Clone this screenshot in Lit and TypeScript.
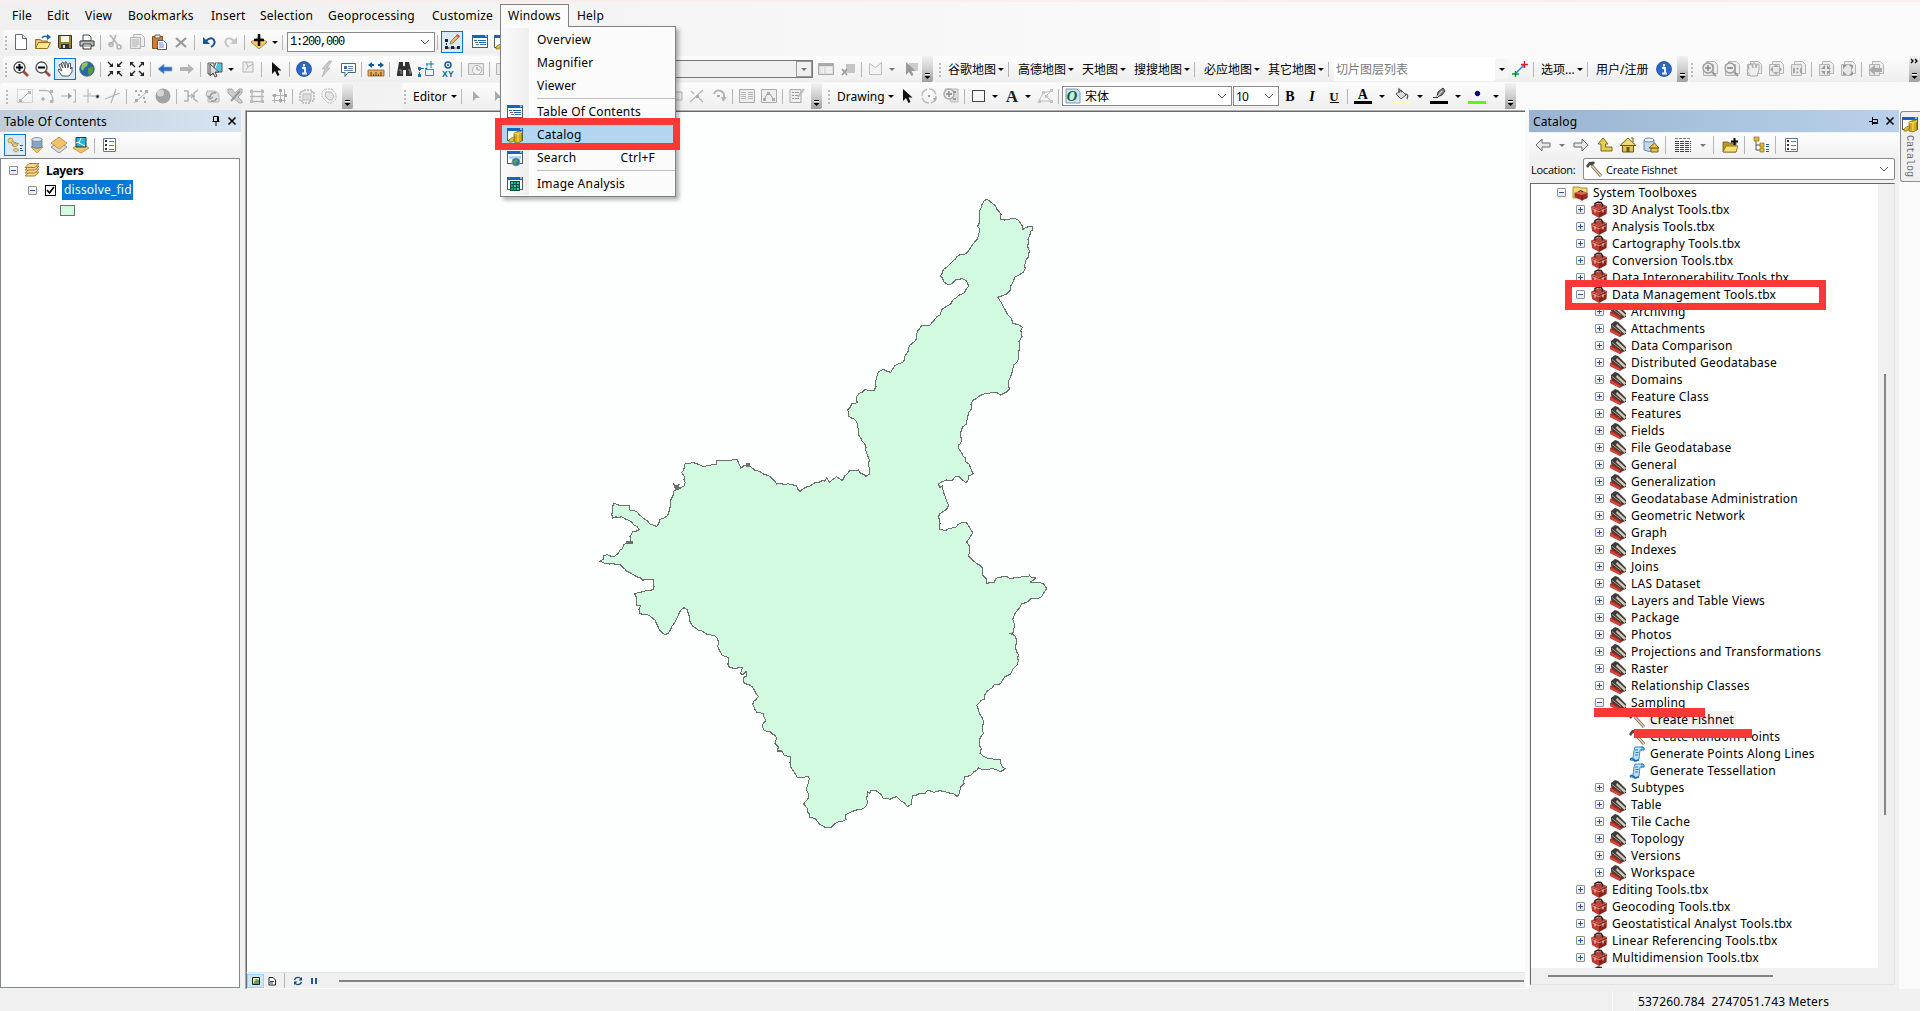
import { LitElement, html, svg, css } from "lit";
import { customElement } from "lit/decorators.js";
import { styleMap } from "lit/directives/style-map.js";

/* ---------- icons, each drawn on a 16x16 grid ---------- */
const G = "#b4b4b4";
const win = (inner: any) => svg`<rect x=".5" y="1.5" width="15" height="12" fill="#fff" stroke="#5a5a5a"/><rect x="0" y="1" width="16" height="3" fill="#1565c0"/><path d="M13 2h2" stroke="#fff"/>${inner}`;
const page = svg`<path d="M4.5.5h8l3 3v9h-11z" fill="#eee" stroke="${G}"/><path d="M1.5 3.5h10v11h-10z" fill="#e6e6e6" stroke="${G}"/>`;
const ICONS: Record<string, any> = {
  new: svg`<path d="M2.5.5h7l4 4v11h-11z" fill="#fdfeff" stroke="#5f6a78"/><path d="M9.500.5v4h4" fill="#dce9f5" stroke="#5f6a78"/>`,
  open: svg`<path d="M.5 14.500v-9h5l1 1.500h6v2" fill="#e7c65a" stroke="#947325"/><path d="M.5 14.500l3-6h12l-3 6z" fill="#ffe68f" stroke="#947325"/><path d="M7 4q2-3 6-1" fill="none" stroke="#11649d" stroke-width="1.500"/><path d="M12 0l4 3-4 3z" fill="#11649d"/>`,
  save: svg`<path d="M1.500 1.500h13v13h-12l-1-1z" fill="#94852b" stroke="#333"/><path d="M4 2h8v6H4z" fill="#f4f6ee"/><path d="M4 10h8v5H4z" fill="#333"/><path d="M6 11h2v3H6z" fill="#ddd"/>`,
  print: svg`<path d="M4 1h6l2 2v4H4z" fill="#fff" stroke="#444"/><path d="M1 7h14v5H1z" fill="#bfc2c4" stroke="#333"/><path d="M4 10h8v5H4z" fill="#fff" stroke="#333"/><path d="M5 12h6" stroke="#777"/><path d="M12 8h2" stroke="#7c2"/>`,
  cut: svg`<g fill="none" stroke="${G}" stroke-width="1.600"><path d="M3 1l8 10M9 1L6 8l-3 3"/><circle cx="4" cy="10.500" r="2"/><circle cx="12" cy="13" r="2"/></g>`,
  copy: svg`${page}<path d="M3 6h7M3 8h7M3 10h7M3 12h5" stroke="${G}"/>`,
  paste: svg`<path d="M1.500 2.500h10v12h-10z" fill="#cf7f2c" stroke="#7f4f1d"/><path d="M4 1h5v3H4z" fill="#eee" stroke="#666"/><path d="M6.500 6.500h6l3 3v6h-9z" fill="#fff" stroke="#4a5a80"/><path d="M8 9h4M8 11h5M8 13h5" stroke="#6f87b5"/>`,
  del: svg`<path d="M3 4l10 9M13 4L3 13" stroke="#999" stroke-width="2.200"/>`,
  undo: svg`<path d="M5 7q5-5 8-1 2 4-3 7" fill="none" stroke="#1b5490" stroke-width="2"/><path d="M2 3v7h7z" fill="#1b5490"/>`,
  redo: svg`<path d="M11 7q-5-5-8-1-2 4 3 7" fill="none" stroke="#c6c6c6" stroke-width="2"/><path d="M14 3v7H7z" fill="#c6c6c6"/>`,
  add: svg`<path d="M0 8l8-5 8 5-8 7z" fill="#f8c966" stroke="#b08b4a"/><path d="M8 0v12M3 6h10" stroke="#000" stroke-width="2.500"/>`,
  edit: svg`<path d="M2.500 6v8h11" fill="none" stroke="#222" stroke-dasharray="2 1"/><path d="M1 5h3v3H1zM1 12h3v3H1zM7 12h3v3H7zM13 12h3v3h-3z" fill="#222"/><path d="M6 10l1-3 6-6 2 2-6 6z" fill="#f0b45c" stroke="#775" stroke-width=".8"/><path d="M13 0l3 2-1 2-3-2z" fill="#c55"/>`,
  toc: win(svg`<path d="M2 6.500h3M6 6.500h8" stroke="#1b65b5"/><path d="M3 8.500h3" stroke="#d43"/><path d="M7 8.500h7" stroke="#1b65b5"/><path d="M4 10.500h3M8 10.500h6" stroke="#47a"/>`),
  cat: win(svg`<path d="M7 6l5-2 3 1v9l-4 2-4-1z" fill="#d1aa19" stroke="#75600c" stroke-width=".7"/><path d="M7 6l4 1v8M11 7l4-2" fill="none" stroke="#f6e47a"/><path d="M2 13q2-3 6-3l-1 3q-2 3-5 2z" fill="#d8c132" stroke="#75600c" stroke-width=".6"/>`),
  search: win(svg`<path d="M2 6h12v3H2z" fill="#b9d5ee"/><circle cx="9" cy="12" r="4" fill="#2475ae" stroke="#99a" stroke-width=".7"/><path d="M6 11l3-2 2 2-3 4z" fill="#52a051"/>`),
  img: win(svg`<rect x="3" y="5" width="10" height="10" fill="#114e3d"/><path d="M4 6h2v2H4zM7 9h2v2H7zM10 6h2v2h-2zM10 12h2v2h-2z" fill="#21d9b1"/><path d="M7 6h2v2H7zM4 9h2v2H4zM10 9h2v2h-2zM4 12h2v2H4zM7 12h2v2H7z" fill="#12a788"/>`),
  zin: svg`<path d="M10 10l5 5" stroke="#9d4b3c" stroke-width="2.600"/><circle cx="6.500" cy="6.500" r="5.500" fill="#f0f5f7" stroke="#4c4c4c" stroke-width="1.300"/><path d="M6.500 3v7M3 6.500h7" stroke="#000" stroke-width="2"/>`,
  zout: svg`<path d="M10 10l5 5" stroke="#9d4b3c" stroke-width="2.600"/><circle cx="6.500" cy="6.500" r="5.500" fill="#f0f5f7" stroke="#4c4c4c" stroke-width="1.300"/><path d="M3 6.500h7" stroke="#000" stroke-width="2"/>`,
  hand: svg`<path d="M5 15L1 9l1-1 3 2L2 4l1.500-1L6 7 4.500 2 6 1l2.500 6L8 1h1.500l1.500 6 1-5 1.500.500L13.500 8l1.500-2v5l-3 4z" fill="#fff" stroke="#444" stroke-width=".9"/>`,
  globe: svg`<circle cx="8" cy="8" r="7.300" fill="#2968aa" stroke="#526b80" stroke-width=".8"/><path d="M3 3q4-3 6-1l-1 3-3 2-1 3-2-2z" fill="#8fc25b"/><path d="M9 7l5-1v4l-3 5-2-3z" fill="#5c9a42"/>`,
  fzi: svg`<g stroke="#222" stroke-width="1.400"><path d="M1 1l4 4M15 1l-4 4M1 15l4-4M15 15l-4-4"/></g><path d="M6 2v4H2zM10 2v4h4zM6 14v-4H2zM10 14v-4h4z" fill="#222"/>`,
  fzo: svg`<g stroke="#222" stroke-width="1.400"><path d="M2 2l4 4M14 2l-4 4M2 14l4-4M14 14l-4-4"/></g><path d="M1 1h4L1 5zM15 1h-4l4 4zM1 15h4l-4-4zM15 15h-4l4-4z" fill="#222"/>`,
  back: svg`<path d="M1 8l6-5v3h8v4H7v3z" fill="#2e66c4" stroke="#8fb1e0" stroke-width=".8"/>`,
  fwd: svg`<path d="M15 8L9 3v3H1v4h8v3z" fill="#b4b4b4"/>`,
  selfeat: svg`<path d="M1 2h6v11H1z" fill="#eee" stroke="#555"/><path d="M8 2h7v9H8z" fill="#4fc9e0" stroke="#555"/><path d="M10 2l-2 5 4 4" stroke="#fff" fill="none"/><path d="M3 3v12l3-3 2 4 2-1-2-4h4z" fill="#ddd" stroke="#333" stroke-width=".9"/>`,
  clr: svg`<path d="M3 1h10v10H3z" fill="#eee" stroke="${G}"/><path d="M6 1l2 5-2 3M8 6l5-3" fill="none" stroke="${G}"/>`,
  arrow: svg`<path d="M4 1v12l3-3 2.500 5 2-1-2-4.500h4z" fill="#111"/>`,
  garrow: svg`<path d="M5 3v10l3-3h4z" fill="#aaa"/>`,
  info: svg`<circle cx="8" cy="8" r="7.500" fill="#2967c8" stroke="#154389" stroke-width=".7"/><path d="M8 3v2.500M6 7h3v5M6 12.500h5" stroke="#fff" stroke-width="1.800" fill="none"/>`,
  bolt: svg`<path d="M11 0L4 8h3l-3 8 8-9H9l5-7z" fill="#c8c8c8" stroke="#aaa" stroke-width=".6"/>`,
  pop: svg`<path d="M1.500 2.500h14v9H8l-3 4v-4H1.500z" fill="#f9fcff" stroke="#416780"/><path d="M4 5h3v3H4z" fill="#31719e"/><path d="M8 5.500h5M8 7.500h5M4 9.500h9" stroke="#68a"/>`,
  meas: svg`<path d="M0 4l4-3v2h8V1l4 3-4 3V5H4v2z" fill="#115b9c"/><path d="M6 4h4" stroke="#f8f8f8" stroke-width="3"/><path d="M0 9h16v6H0z" fill="#e4ac60" stroke="#8d5820" stroke-width=".8"/><path d="M3 11v4M5.500 13v2M8 11v4M10.500 13v2M13 11v4" stroke="#613a10"/>`,
  bino: svg`<path d="M3 1h4v4h2V1h4l3 12v2h-6V9H7v6H1v-2z" fill="#333"/><path d="M3 9h2v4M12 9h2v4" stroke="#999" fill="none"/>`,
  route: svg`<path d="M1.500 14V7.500H9V2" fill="none" stroke="#1976a5" stroke-dasharray="3 1"/><path d="M8 3h8M13 0v7" stroke="#1976a5"/><path d="M7.500 8.500h8v6h-8z" fill="#eef7ff" stroke="#5a7e99"/><path d="M0 13h3v3H0zM0 6h3v3H0z" fill="#1976a5"/>`,
  xy: svg`<circle cx="8" cy="4" r="3" fill="none" stroke="#125b94" stroke-width="1.500"/><circle cx="8" cy="4" r="1" fill="#125b94"/><text x="8" y="15.500" font-family="Liberation Sans" font-weight="700" font-size="8.500" text-anchor="middle" fill="#125b94">XY</text>`,
  clock: svg`<path d="M.5 2.500h15v11H.5z" fill="#e8e8e8" stroke="${G}"/><circle cx="9" cy="9" r="4.500" fill="#f4f4f4" stroke="${G}"/><path d="M9 6v3h3" stroke="#999" fill="none"/>`,
  g1: svg`<path d="M.5 1.500h15v13H.5z" fill="none" stroke="${G}" stroke-dasharray="1 1"/><path d="M4 12l8-8" stroke="${G}"/><path d="M2 11h3v3H2zM11 3h3v3h-3z" fill="${G}"/>`,
  g2: svg`<path d="M0 2.500h8q6 2 6 12" fill="none" stroke="${G}" stroke-width="1.300"/><path d="M11 2h3v3h-3zM11 12h3v3h-3z" fill="${G}"/><path d="M2 11h4M4 9v4" stroke="#999"/>`,
  g3: svg`<path d="M0 8h7" stroke="${G}"/><path d="M7 5l4 3-4 3z" fill="#999"/><path d="M14.500 2v12M12 2h3M12 14h3" stroke="${G}" fill="none"/>`,
  g4: svg`<path d="M5 1v14M0 8h16" stroke="${G}"/><path d="M5 6h3M9 8h2M13 7h3v3h-3z" stroke="${G}"/>`,
  g5: svg`<path d="M0 11L15 5M6 15L11 1" stroke="${G}" stroke-width="1.300"/>`,
  g6: svg`<path d="M1 15L15 3" stroke="${G}"/><path d="M2 2h2v2H2zM7 2h2v2H7zM12 2h3v3h-3zM5 6h2v2H5zM10 9h2v2h-2zM2 11h3v3H2zM11 13h2v2h-2z" fill="#aaa"/>`,
  ball: svg`<circle cx="8" cy="8" r="7.500" fill="#a3a3a3"/><circle cx="5.500" cy="5" r="3.500" fill="#d6d6d6"/>`,
  g7: svg`<path d="M1 3h4v10H1M15 2l-4 3v6l4 3" fill="none" stroke="${G}" stroke-width="1.500"/><path d="M5 8h5M8 6l3 2-3 2" stroke="#999" fill="none"/>`,
  g8: svg`<path d="M2 3h6q6 0 6 6v5H3V8H1z" fill="#e0e0e0" stroke="${G}"/><path d="M11 5q-5-1-6 4M3 8l2 3 3-2M6 13q4 1 6-3" stroke="#999" stroke-width="1.500" fill="none"/>`,
  g9: svg`<path d="M1 1h4l3 4 4-4h3v4l-4 4 4 4v2h-3L4 8 1 5z" fill="#ccc" stroke="#aaa"/><path d="M4 13L13 3" stroke="#999" stroke-width="2"/>`,
  g10: svg`<path d="M3 1v14M13 1v14M1 3.500h14M1 8.500h14M1 13.500h14" stroke="${G}" stroke-width="1.300" fill="none"/><path d="M1 2h3v3H1zM12 2h3v3h-3zM1 12h3v3H1zM12 12h3v3h-3z" fill="#bbb"/>`,
  g11: svg`<path d="M9.500 1v14M13.500 1v14M1 7.500h14M1 12.500h14M3.500 6v9" stroke="${G}" fill="none"/><path d="M8 1h3v3H8zM2 6h3v3H2zM8 11h3v3H8zM13 6h3v3h-3z" fill="#aaa"/>`,
  g12: svg`<path d="M1 4h3V2h8v2h3v9h-4v2H4v-2H1z" fill="#eee" stroke="${G}" stroke-width="1.500" stroke-dasharray="2 1"/><path d="M4 6h8v6H4z" fill="#ddd" stroke="#bbb"/>`,
  g13: svg`<path d="M4 1h7l4 5v5l-4 4H7L1 9V4z" fill="none" stroke="${G}" stroke-dasharray="2 1"/><path d="M5 4h5l3 4-2 4H8L4 8z" fill="#e6e6e6" stroke="${G}"/>`,
  tbl: svg`<path d="M.5 2.500h15v11H.5z" fill="#ddd" stroke="#aaa"/><path d="M1 3h14v2H1z" fill="#aaa"/><path d="M3 7h3M3 9h3M3 11h3M8 7h6M8 9h6M8 11h6" stroke="#fff"/>`,
  tblx: svg`<path d="M6 3h9v9H6z" fill="#c5c5c5"/><path d="M2 8l5 6M7 8l-5 6" stroke="#999" stroke-width="1.600"/>`,
  poly: svg`<path d="M1.500 2.500l6 4 6-5v12h-12z" fill="#f3f3f3" stroke="#bbb"/>`,
  seld: svg`<path d="M6 2h9v8H6z" fill="#ccc"/><path d="M3 1v13l3-3 2.500 4 2-1-2-4h4z" fill="#999"/>`,
  gsq: svg`<path d="M1 4h14v8H1z" fill="#eee" stroke="${G}"/>`,
  gx: svg`<path d="M1 14L14 2M2 3l3 3M10 10l4 4" stroke="${G}" stroke-width="1.200"/><path d="M7 7h3v3H7z" fill="#aaa"/>`,
  rot: svg`<path d="M3 6q2-5 7-3 4 2 3 7" fill="none" stroke="#b5b5b5" stroke-width="2"/><path d="M10 9h6l-4 5z" fill="#b5b5b5"/><path d="M6 8h3" stroke="#aaa" stroke-width="2"/>`,
  gtb: svg`<path d="M.5 1.500h15v13H.5z" fill="#eee" stroke="#aaa"/><path d="M2 4.500h5M2 6.500h5M2 8.500h5M2 10.500h5M9 4.500h5M9 6.500h5M9 8.500h5M9 10.500h5" stroke="${G}"/>`,
  gnode: svg`<path d="M.5 1.500h15v13H.5z" fill="#eee" stroke="#aaa"/><path d="M3 12l3-6h3l4 6" fill="none" stroke="#999"/><path d="M6 4h3v3H6zM2 10h3v3H2zM11 10h3v3h-3z" fill="#aaa"/>`,
  gform: svg`<path d="M1 1.500h11v13H1z" fill="#eee" stroke="#aaa"/><path d="M3 4.500h2M3 7.500h2M3 10.500h2M6 4.500h4M6 7.500h3M6 10.500h4" stroke="#999"/><path d="M9 9l6-8" stroke="#bbb" stroke-width="2"/>`,
  rotd: svg`<circle cx="8" cy="8" r="7" fill="none" stroke="#bbb" stroke-width="1.500" stroke-dasharray="9 2"/><rect x="7" y="7" width="2" height="2" fill="#999"/><path d="M12 10h4l-2 4z" fill="#aaa"/>`,
  zsel: svg`<path d="M2 1h13v13H8z" fill="#ddd" stroke="#bbb"/><circle cx="6" cy="6" r="5" fill="#eee" stroke="#aaa" stroke-width="1.500"/><path d="M6 3v6M3 6h6M10 4h3M10 11h3" stroke="#999" stroke-width="1.800"/>`,
  rect: svg`<rect x="1.500" y="2.500" width="12" height="11" fill="#f5f6f8" stroke="#444"/>`,
  A: svg`<text x="8" y="14" font-family="Liberation Serif" font-weight="700" font-size="17" text-anchor="middle" fill="#222">A</text>`,
  nodes: svg`<path d="M2 13l4-8 8-2-5 5 5 5z" fill="none" stroke="#bbb"/><path d="M1 12h3v3H1zM5 3h3v3H5zM13 1h3v3h-3zM13 12h3v3h-3zM8 7h3v3H8z" fill="#c4c4c4"/>`,
  B: svg`<text x="8" y="13" font-family="Liberation Serif" font-weight="700" font-size="14" text-anchor="middle">B</text>`,
  I: svg`<text x="8" y="13" font-family="Liberation Serif" font-weight="700" font-style="italic" font-size="14" text-anchor="middle">I</text>`,
  U: svg`<text x="8" y="12.500" font-family="Liberation Serif" font-weight="700" font-size="13" text-anchor="middle">U</text><path d="M4 14.500h9" stroke="#000"/>`,
  Ac: svg`<text x="8" y="11" font-family="Liberation Serif" font-weight="700" font-size="14" text-anchor="middle">A</text><path d="M-1 14.500h18" stroke="#000" stroke-width="3"/>`,
  fill: svg`<path d="M3 6l5-4 5 5-5 4z" fill="#ddd" stroke="#555"/><path d="M6 5V1l3 3M12 6q4 0 2 5" stroke="#555" stroke-width="1.300" fill="none"/><path d="M-1 14.500h18" stroke="#ffffb0" stroke-width="3"/>`,
  pen: svg`<path d="M2 9.500h5" stroke="#333" fill="none"/><path d="M6 9l1-5 5-4 2 3-3 4z" fill="#888" stroke="#222" stroke-width=".9"/><path d="M6 9l5-6" stroke="#eee"/><path d="M-1 14.500h18" stroke="#000" stroke-width="3"/>`,
  dot: svg`<circle cx="8.500" cy="5.500" r="2.200" fill="#00a" stroke="#000"/><path d="M-1 14.500h18" stroke="#5f0" stroke-width="3"/>`,
  link: svg`<path d="M4 12L12 4" stroke="#1a8cd8" stroke-width="1.500"/><path d="M9 4h3v3" stroke="#1a8cd8" fill="none"/><path d="M0 13h7M3.500 10v6" stroke="#0a8f2f" stroke-width="1.400"/><path d="M9 3.500h7M12.500 0v7" stroke="#e02020" stroke-width="1.400"/>`,
  pzi: svg`${page}<circle cx="6" cy="7" r="5" fill="#eee" stroke="#999" stroke-width="1.300"/><path d="M3 7h6M6 4v6M10 11l4 4" stroke="#999" stroke-width="2"/>`,
  pzo: svg`${page}<circle cx="6" cy="7" r="5" fill="#eee" stroke="#999" stroke-width="1.300"/><path d="M3 7h6M10 11l4 4" stroke="#999" stroke-width="2"/>`,
  phand: svg`${page}<path d="M4 15L1 9l2-1-1-5 2 1 1-2 2 5V2h2l1 5 1-4h2v6l-2 6z" fill="#eee" stroke="#aaa"/>`,
  pfull: svg`${page}<path d="M8 3l3 3H5zM8 14l3-3H5zM2 8.500l3-3v6zM14 8.500l-3-3v6z" fill="#aaa"/>`,
  p11: svg`${page}<path d="M4 7v5M11 7v5M7.500 7v1.500M7.500 10.500v1.500" stroke="#999" stroke-width="1.600"/>`,
  pfi: svg`${page}<path d="M7 4v4H3zM9 4v4h4zM7 14v-4H3zM9 14v-4h4z" fill="#999"/>`,
  pfo: svg`${page}<path d="M3 4h4L3 8zM13 4H9l4 4zM3 14h4l-4-4zM13 14H9l4-4z" fill="#999"/>`,
  pback: svg`${page}<path d="M1 9l6-5v3h7v4H7v3z" fill="#aaa"/>`,
  tdraw: svg`<path d="M3 3l3 6h3M4 4l8 3" stroke="#a9893d" fill="none"/><circle cx="3.500" cy="3.500" r="2.500" fill="#f1cd78" stroke="#ab8337" stroke-width=".7"/><path d="M8 6l3 2-3 2-3-2zM9 11l3 2-3 2-3-2z" fill="#f1cd78" stroke="#ab8337" stroke-width=".7"/><path d="M13 8.500h3M13 13.500h3M13 11.500h2" stroke="#1865a5"/>`,
  tsrc: svg`<path d="M2 10l6-2 6 2-6 6z" fill="#f2c662" stroke="#b78a35" stroke-width=".7"/><path d="M3 2v8q5 3 10 0V2z" fill="#8aa5bd" stroke="#56718a" stroke-width=".7"/><ellipse cx="8" cy="2.500" rx="5" ry="2" fill="#dbe9f3" stroke="#56718a" stroke-width=".7"/>`,
  tvis: svg`<path d="M0 10l8-5 8 5-8 6z" fill="#ddd" stroke="#777" stroke-width=".8"/><path d="M0 6l8-6 8 6-8 6z" fill="#f3c36b" stroke="#b58338" stroke-width=".8"/>`,
  tsel: svg`<path d="M0 11l8-5 8 5-8 5z" fill="#f3c36b" stroke="#b58338" stroke-width=".8"/><path d="M3 .5h10v9.500H3z" fill="#28b5dc" stroke="#333"/><path d="M8 1l-2 5 6 3M6 5l-3 1" stroke="#fff" fill="none"/>`,
  opts: svg`<path d="M2.500 1.500h12v13h-12z" fill="#fff" stroke="#64748a"/><path d="M4 3h2v2H4zM4 7h2v2H4zM4 11h2v2H4z" fill="#333"/><path d="M8 4.500h5M8 8.500h5M8 12.500h5" stroke="#3e7fbc"/>`,
  layers: svg`<g fill="#f4d490" stroke="#ad7a2a"><path d="M1 14l4-4h10l-4 4z"/><path d="M1 11l4-4h10l-4 4z"/><path d="M1 8l4-4h10l-4 4z"/><path d="M1 5.500l4-4h10l-4 4z"/></g>`,
  cback: svg`<path d="M1 8l6-6v4h8v4H7v4z" fill="#e8e8e8" stroke="#6b6b6b"/>`,
  cfwd: svg`<path d="M15 8L9 2v4H1v4h8v4z" fill="#e8e8e8" stroke="#6b6b6b"/>`,
  up: svg`<path d="M6 1l5 6H8.500v3H15v4H4V7H1z" fill="#e6cd52" stroke="#7d6a12"/>`,
  home: svg`<path d="M2.500 8h11v7h-11z" fill="#dcc35a" stroke="#6b5510"/><path d="M0 8.500L8 1l8 7.500z" fill="#f0da78" stroke="#6b5510"/><path d="M6.500 10h3v5h-3z" fill="#6b5510"/><path d="M11 1h2v4" stroke="#6b5510" fill="none"/>`,
  dbhome: svg`<path d="M1 3v10q5 3 10 0V3z" fill="#c5d8e8" stroke="#6d88a3"/><ellipse cx="6" cy="3" rx="5" ry="2" fill="#eef5fa" stroke="#6d88a3"/><path d="M8 11h7v4H8z" fill="#e3c455" stroke="#7a6112"/><path d="M6 11l5.500-5L16 11z" fill="#e3c455" stroke="#7a6112"/>`,
  list: svg`<path d="M0 1.500h16" stroke="#777" stroke-dasharray="3 1"/><path d="M0 4.500h16M0 6.500h16M0 8.500h16M0 10.500h16M0 12.500h16M0 14.500h16" stroke="#444" stroke-dasharray="4 1"/>`,
  fconn: svg`<path d="M1 5h5l1 1h7v9H1z" fill="#b99a22" stroke="#6b5510" stroke-width=".8"/><path d="M1 15l3-6h12l-2 6z" fill="#f5e07c" stroke="#7d6a12" stroke-width=".8"/><path d="M12.500 1v7M9 4.500h7" stroke="#000" stroke-width="2"/>`,
  ctree: svg`<path d="M3 3v10h5M3 8h5" stroke="#555" fill="none"/><path d="M1 0h5v4H1zM7 6h4v4H7zM7 11h4v4H7z" fill="#e1b93a" stroke="#8d6d14" stroke-width=".7"/><path d="M13 7.500h3M13 9.500h3M13 12.500h3M13 14.500h3" stroke="#1c5dab"/>`,
  hammer: svg`<path d="M6 5l9 10" stroke="#6b5e44" stroke-width="3"/><path d="M6 5l9 10" stroke="#e4d6b5" stroke-width="1.600"/><path d="M0 5l3-4 5-.5L9 2 6 5 4 4 2 7z" fill="#4a4a4a"/>`,
  script: svg`<path d="M6 1h8l-1 3h-2l-1 9-3 2-6-1 1-2h2L5 4z" fill="#bfe0f8" stroke="#2e82c6" stroke-width=".9"/><path d="M12 1q4 0 3 3h-3" fill="#7cbbec" stroke="#1669b4"/><path d="M1 13q4-1 5 2l4-1" fill="none" stroke="#1669b4" stroke-width="1.500"/><path d="M6 4h3M6.500 6.500h3M6 9h3" stroke="#2476bb"/>`,
  box: svg`<path d="M0 4.500l8 3V16l-7-4z" fill="#bb3a30"/><path d="M8 7.500L16 4l-.5 8L8 16z" fill="#8c211a"/><path d="M0 4.500L8 1l8 3-8 3.500z" fill="#b8453b"/><path d="M4 4.500V1.500L7 0l3 .5 1.500 2v2" fill="none" stroke="#33211f" stroke-width="1.500"/><path d="M.5 6.500L8 9.800 15.800 6.500" stroke="#ea9a90" fill="none" stroke-width=".8"/><path d="M4 7.500v3M12 7.500v3" stroke="#eee"/>`,
  set: svg`<path d="M0 8l4-2 9 6v2l-3 2-10-5z" fill="#a8281f"/><path d="M0 8l10 5.500V16L0 11z" fill="#d0463b"/><path d="M1 3l4-3 3 1 8 8v4l-3 1L1 6.500z" fill="#3f3b38"/><path d="M7 3l9 8-1.500 2L6 5z" fill="#d8ccb5"/><path d="M2 4.500l9 7" stroke="#a5a19a" stroke-width="1"/>`,
  sysbox: svg`<path d="M1 2h6l1 1h7v10H1z" fill="#f1da74" stroke="#ab8d2a"/><path d="M2.500 8L9 5.500l6.500 2.500v5L10 15.500 2.500 12z" fill="#a32a21"/><path d="M2.500 8L9 5.500l6.500 2.500-5.500 2z" fill="#d9665a"/><path d="M6 7q2.500-3 5 0" stroke="#333" fill="none"/><path d="M10 10v5.500" stroke="#701611"/>`,
  mdata: svg`<path d="M4.500 4.500h7v7h-7z" fill="#e5efaa" stroke="#222"/><path d="M5 11l3-5 3 1v4z" fill="#6b9d5e"/>`,
  mpage: svg`<path d="M5 4.500h4l2.500 2.500v5H5z" fill="#fff" stroke="#222"/><path d="M6 8.500h4M6 10h3" stroke="#147"/>`,
  refresh: svg`<path d="M4.500 7q1-3 4.500-2.500l2 1M11.500 9q-1 3-4.500 2.500l-2-1" stroke="#0c4a86" stroke-width="1.200" fill="none"/><path d="M12 4v3.500H8.500zM4 12V8.500h3.500z" fill="#0c4a86"/>`,
  pause: svg`<path d="M6 5v6M10 5v6" stroke="#1a59ad" stroke-width="2"/>`,
  pin: svg`<path d="M5.500 3.500h5v5h-5zM9.500 4v4M4.500 8.500h7M8 9v4" fill="none" stroke="#000"/>`,
  pinh: svg`<path d="M6.500 6.500h5v4h-5zM6.500 4v8M3 8.500h4M7 9.500h5" fill="none" stroke="#000" stroke-width="1"/>`,
  x: svg`<path d="M4.500 4.500l7 7M11.500 4.500l-7 7" stroke="#000" stroke-width="1.600"/>`,
};
const icon = (n: string) => html`<svg class="ic" viewBox="0 0 16 16">${ICONS[n]}</svg>`;

/* ---------- toolbar description ---------- */
type Item = string | number | { t: string; w: number } | { over: boolean } | { tpl: any };
const T = (t: string, w: number) => ({ t, w });
const OVER = { over: false };
const combo = (cls: string, content: any) => ({ tpl: html`<span class="combo ${cls}">${content}<svg class="chev" viewBox="0 0 10 6"><path d="M1 1l4 4 4-4" fill="none" stroke="#555"/></svg></span>` });

const items = (list: Item[]) => list.map((i) => {
  if (typeof i === "number") return html`<span class="gap" style=${styleMap({ width: i + "px" })}></span>`;
  if (typeof i === "string") {
    if (i === "|") return html`<span class="sep"></span>`;
    if (i === "v") return html`<span class="dd"></span>`;
    if (i === "vg") return html`<span class="dd grey"></span>`;
    if (i === ":") return html`<span class="grip"></span>`;
    if (i[0] === "*") return html`<span class="slot on">${icon(i.slice(1))}</span>`;
    return html`<span class="slot">${icon(i)}</span>`;
  }
  if ("t" in i) return html`<span class="lbl" style=${styleMap({ width: i.w + "px" })}>${i.t}</span>`;
  if ("over" in i) return html`<span class="over"><svg viewBox="0 0 11 26">${i.over ? svg`<path d="M2 3l2 2-2 2M6 3l2 2-2 2" fill="none" stroke="#000" stroke-width="1.300"/>` : ""}<path d="M3 17.500h5" stroke="#000"/><path d="M2.500 20h6l-3 3z"/><path d="M3 18.500h5" stroke="#fff"/></svg></span>`;
  return i.tpl;
});

const MENU: [string, number][] = [["File", 35], ["Edit", 38], ["View", 43], ["Bookmarks", 83], ["Insert", 49], ["Selection", 68], ["Geoprocessing", 104], ["Customize", 76], ["Windows", 69], ["Help", 50]];

const ROW1: Item[] = ["new", "open", "save", "print", "|", "cut", "copy", "paste", "del", "|", "undo", "redo", "|", "add", "v", "|", 1, combo("scale", "1:200,000"), "|", "*edit", 6, "toc", "cat", "search"];
const ROW2: Item[] = ["zin", "zout", "*hand", "globe", "|", "fzi", "fzo", "|", "back", "fwd", "|", "selfeat", "v", 1, "clr", "|", "arrow", "|", "info", "bolt", "pop", "|", "meas", "|", "bino", "route", "xy", "|", "clock", "|", "clock"];
const CN: Item[] = [T("谷歌地图", 48), "v", "|", 6, T("高德地图", 48), "v", 6, T("天地图", 36), "v", 6, T("搜搜地图", 48), "v", "|", 6, T("必应地图", 48), "v", 6, T("其它地图", 48), "v", "|", 2];

type Row = [number, string, string, string];
const TREE: Row[] = [
  [0, "-", "sysbox", "System Toolboxes"],
  ...["3D Analyst", "Analysis", "Cartography", "Conversion", "Data Interoperability"].map((n) => [1, "+", "box", n + " Tools.tbx"] as Row),
  [1, "-", "box", "Data Management Tools.tbx"],
  ...["Archiving", "Attachments", "Data Comparison", "Distributed Geodatabase", "Domains", "Feature Class", "Features", "Fields", "File Geodatabase", "General", "Generalization", "Geodatabase Administration", "Geometric Network", "Graph", "Indexes", "Joins", "LAS Dataset", "Layers and Table Views", "Package", "Photos", "Projections and Transformations", "Raster", "Relationship Classes"].map((n) => [2, "+", "set", n] as Row),
  [2, "-", "set", "Sampling"],
  [3, "", "hammer", "Create Fishnet"],
  [3, "", "hammer", "Create Random Points"],
  [3, "", "script", "Generate Points Along Lines"],
  [3, "", "script", "Generate Tessellation"],
  ...["Subtypes", "Table", "Tile Cache", "Topology", "Versions", "Workspace"].map((n) => [2, "+", "set", n] as Row),
  ...["Editing", "Geocoding", "Geostatistical Analyst", "Linear Referencing", "Multidimension"].map((n) => [1, "+", "box", n + " Tools.tbx"] as Row),
  [1, "", "box", ""],
];

/* Boundary of the dissolve_fid layer, three units to a pixel. */
const SHAPE = "1190,58 1197,61 1203,67 1211,73 1218,80 1220,88 1228,95 1233,103 1232,118 1258,118 1264,115 1276,116 1285,121 1292,130 1296,136 1299,148 1306,143 1327,140 1327,150 1321,155 1320,165 1314,178 1313,200 1318,212 1316,232 1309,236 1306,250 1303,256 1306,266 1300,277 1285,286 1274,292 1270,305 1261,320 1262,330 1250,342 1238,347 1223,352 1232,365 1240,380 1250,400 1265,417 1268,430 1285,434 1297,442 1292,452 1296,470 1287,485 1290,500 1286,515 1285,538 1280,548 1270,556 1266,578 1257,600 1256,615 1258,628 1248,637 1232,645 1222,639 1205,637 1185,641 1165,650 1150,660 1143,672 1144,688 1136,698 1132,715 1129,732 1117,742 1112,758 1112,790 1105,796 1106,806 1115,818 1120,830 1127,833 1126,845 1138,853 1144,870 1150,882 1136,888 1134,900 1128,909 1118,900 1108,890 1096,890 1086,902 1070,900 1054,906 1045,912 1050,922 1057,918 1060,935 1066,950 1070,965 1076,975 1070,988 1048,1002 1048,1048 1066,1052 1075,1046 1097,1042 1105,1033 1115,1028 1130,1029 1137,1040 1148,1058 1141,1070 1130,1086 1138,1098 1140,1112 1135,1128 1150,1142 1168,1155 1177,1163 1178,1185 1189,1196 1191,1210 1213,1208 1217,1195 1235,1191 1248,1188 1258,1195 1285,1194 1300,1189 1316,1189 1319,1185 1322,1191 1336,1194 1322,1206 1345,1207 1360,1211 1370,1226 1360,1240 1355,1250 1345,1255 1322,1256 1312,1266 1295,1272 1290,1282 1275,1300 1268,1318 1274,1334 1271,1358 1262,1361 1275,1367 1280,1385 1278,1408 1286,1425 1281,1455 1267,1470 1262,1482 1245,1490 1232,1510 1212,1515 1190,1536 1182,1558 1160,1576 1168,1600 1180,1625 1178,1650 1180,1660 1171,1672 1170,1700 1174,1705 1170,1720 1182,1730 1205,1736 1231,1738 1233,1752 1246,1766 1230,1775 1210,1766 1188,1768 1165,1764 1145,1784 1125,1790 1122,1810 1112,1820 1102,1850 1090,1840 1072,1837 1048,1832 1030,1837 1013,1831 1005,1840 985,1842 968,1848 964,1872 952,1880 945,1870 932,1862 920,1850 908,1854 900,1858 880,1855 872,1842 858,1832 842,1832 840,1840 832,1836 830,1875 815,1888 785,1895 765,1905 768,1918 745,1925 724,1942 705,1942 688,1932 678,1918 660,1912 652,1895 652,1885 641,1872 655,1855 657,1845 650,1830 655,1810 658,1795 654,1788 640,1793 622,1793 608,1770 600,1748 600,1730 582,1725 575,1712 563,1713 565,1700 555,1690 560,1675 540,1655 522,1650 517,1640 527,1622 520,1602 500,1597 488,1573 505,1550 492,1528 478,1515 460,1507 461,1492 470,1488 468,1475 458,1484 452,1480 458,1462 440,1465 416,1460 415,1432 396,1425 383,1398 387,1390 380,1372 350,1362 310,1340 300,1325 292,1290 282,1283 273,1290 258,1320 245,1340 235,1360 225,1364 208,1350 195,1320 180,1308 150,1300 147,1288 151,1278 140,1276 139,1258 133,1240 150,1238 185,1230 190,1228 190,1198 158,1200 140,1190 110,1174 90,1154 58,1152 28,1145 40,1138 42,1126 75,1128 85,1120 107,1090 122,1088 120,1070 128,1055 148,1050 125,1026 95,1010 68,1014 68,985 70,970 90,977 118,977 120,990 132,992 160,1015 180,1032 200,1040 210,1018 232,1007 238,990 242,960 250,945 250,935 262,925 283,918 284,890 275,878 285,852 300,850 318,850 342,860 378,855 380,842 400,842 442,839 452,865 465,855 480,858 495,872 515,878 540,890 560,912 605,914 620,917 630,934 640,926 660,918 675,908 704,903 710,893 718,906 740,890 757,902 765,887 780,870 805,870 812,880 828,889 838,882 840,868 835,855 838,840 830,820 828,800 806,765 800,725 775,708 773,690 785,672 802,668 800,650 825,628 852,632 858,620 858,600 865,575 880,568 902,577 915,556 938,548 960,495 978,480 980,462 995,437 1020,435 1050,405 1056,388 1082,372 1090,358 1122,340 1136,318 1130,303 1118,296 1098,298 1080,314 1062,306 1052,288 1060,268 1085,247 1110,224 1125,222 1145,198 1162,178 1168,145 1162,140 1170,120 1168,95 1175,75 1183,62";

/** Splits long edges and nudges the new points a little, for a natural coastline. */
const roughen = (s: string) => {
  const p = s.split(" ").map((q) => q.split(",").map(Number));
  let seed = 7;
  const rnd = () => ((seed = (seed * 16807) % 2147483647) / 2147483647 - 0.5) * 5;
  return p.flatMap(([x, y], i) => {
    const [u, v] = p[(i + 1) % p.length];
    const n = Math.floor(Math.hypot(u - x, v - y) / 9);
    const out = [`${x},${y}`];
    for (let k = 1; k < n; k++) out.push(`${x + ((u - x) * k) / n + rnd()},${y + ((v - y) * k) / n + rnd()}`);
    return out;
  }).join(" ");
};
const OUTLINE = roughen(SHAPE);

@customElement("app-root")
export class AppRoot extends LitElement {
  static styles = css`
    :host { display: block; width: 1920px; height: 1011px; }
    * { box-sizing: border-box; }
    .app { position: relative; display: flex; flex-direction: column; width: 1920px; height: 1011px; overflow: hidden; color: #000;
      background: linear-gradient(90deg, #f0f0f0 0, #f1f1f1 240px, #f9f9f9 1100px, #fafafa 1920px);
      font: 12px/17px "Noto Sans", "Noto Sans CJK SC", sans-serif; letter-spacing: .22px; white-space: pre; }
    .ic { width: 16px; height: 16px; flex: none; display: block; overflow: visible; }
    .menubar { height: 30px; padding: 2px 0 0 4px; display: flex; border-top: 2px solid #f9eeeb; }
    .menubar span { display: flex; padding: 0 0 2px 8px; align-items: center; height: 24px; }
    .menubar .open { background: #fbfbfb; border: 1px solid #808080; border-bottom: 0; padding: 0 0 2px 7px; position: relative; z-index: 3; height: 23px; }
    .row { display: flex; height: 26px; }
    .row.third { margin-top: 1px; }
    .bar { display: flex; align-items: center; height: 26px; flex: none; border-radius: 3px 0 0 3px; background: linear-gradient(#fcfcfc, #f6f6f6 45%, #eeeeee); }
    .row1 { margin-left: 3px; width: 560px; height: 24px; }
    .row2 { margin-left: 3px; }
    .slot { width: 22px; height: 22px; display: flex; align-items: center; justify-content: center; flex: none; }
    .on { border: 1px solid #0078d7; background: #d9e9f7; }
    .gap { flex: none; }
    .sep { width: 6px; height: 15px; flex: none; background: linear-gradient(#b5b5b5, #b5b5b5) 2px 0 / 1px 100% no-repeat; }
    .dd { width: 10px; flex: none; display: flex; justify-content: center; }
    .dd::after { content: ""; border: 3px solid transparent; border-top-color: #000; border-bottom: 0; }
    .dd.grey::after { border-top-color: #777; }
    .grip { width: 10px; height: 15px; flex: none; background: radial-gradient(circle, #b8b8b8 1px, transparent 1.300px) 1px 0 / 4px 4px repeat-y; }
    .grip.slim { width: 7px; }
    .lbl { flex: none; letter-spacing: 0; }
    .over { width: 11px; height: 26px; flex: none; background: linear-gradient(#f2f2f2, #cfcfcf 50%, #a0a0a0); border-radius: 0 2px 2px 0; }
    .over svg { width: 11px; height: 26px; display: block; }
    .combo { display: flex; align-items: center; justify-content: space-between; flex: none; background: #fff; border: 1px solid #8a8a8a; height: 20px; padding: 0 4px 0 2px; }
    .chev { width: 10px; height: 6px; flex: none; margin-left: 4px; }
    .scale { width: 148px; font: 12px "Liberation Mono", monospace; letter-spacing: -1.200px; }
    .fontc { width: 170px; letter-spacing: 0; }
    .fontc .ic, .loc .ic { margin-right: 4px; }
    .fontc .o { margin-right: auto; }
    .sizec { width: 46px; margin-left: 1px; letter-spacing: -.8px; }
    .oldcombo { width: 160px; height: 18px; border: 1px solid #777; background: #f0f0f0; display: flex; justify-content: flex-end; flex: none; }
    .oldcombo .dd { width: 16px; align-items: center; border: 1px solid #999; }
    .tiles { width: 161px; height: 24px; padding-left: 2px; display: flex; align-items: center; background: #fff; color: #7a7a7a; flex: none; letter-spacing: 0; }
    .tilesdd { width: 13px; height: 20px; display: flex; align-items: center; background: #f5f5f5; justify-content: center; }

    .body { display: flex; height: 879px; margin-top: 1px; flex: none; }
    .toc { width: 241px; display: flex; flex-direction: column; background: #f0f0f0; }
    .head { height: 22px; display: flex; align-items: center; padding: 0 1px 0 4px; background: linear-gradient(90deg, #bfcddb, #d7e4f2); flex: none; }
    .head b { font-weight: 400; margin-right: auto; letter-spacing: .15px; }
    .tools { display: flex; align-items: center; height: 26px; padding-left: 4px; background: linear-gradient(#fdfdfd, #f1f1f1); flex: none; }
    .toclist { flex: 1; width: 240px; margin-bottom: 1px; border: 1px solid #828790; background: #fff; display: flex; flex-direction: column; padding-top: 1px; }
    .tr { display: flex; align-items: center; height: 20px; flex: none; }
    .exp { width: 9px; height: 9px; flex: none; border: 1px solid #919191; background: linear-gradient(#fff, #e9e9e9); border-radius: 1px; }
    .exp.none { border: 0; background: none; }
    .exp svg { display: block; width: 7px; height: 7px; }
    .l0 { padding-left: 8px; gap: 6px; font-weight: 700; letter-spacing: -.3px; }
    .l1 { padding-left: 27px; gap: 8px; }
    .l1 .chk { width: 11px; height: 11px; flex: none; border: 1px solid #000; }
    .l1 .chk svg { display: block; width: 9px; height: 9px; }
    .l1 .sel { background: #0078d7; color: #fff; height: 20px; line-height: 19px; width: 71px; margin-left: -2px; padding-left: 2px; }
    .sw { width: 15px; height: 11px; margin-left: 59px; background: #d1fae0; border: 1px solid #6e6e6e; }

    .mapwrap { width: 1280px; margin-left: 4px; display: flex; flex-direction: column; border-left: 1px solid #a8a8a8; border-top: 1px solid #b0b0b0; background: #f0f0f0; }
    .map { height: 862px; border-top: 1px solid #696969; border-left: 1px solid #696969; background: #fdfefe; flex: none; border-bottom: 1px solid #e3e3e3; }
    .map svg { display: block; width: 1278px; height: 859px; }
    .mbar { height: 16px; display: flex; align-items: center; border-left: 1px solid #696969; border-bottom: 1px solid #fff; }
    .mbar .v { width: 16px; height: 14px; display: flex; align-items: center; justify-content: center; }
    .mbar .von { background: #cce8ff; border: 1px solid #99d1ff; width: 17px; }
    .mbar .line { height: 2px; background: #858585; flex: 1; margin: 0 1px 0 17px; }

    .cat { width: 370px; margin-left: 4px; display: flex; flex-direction: column; background: #f0f0f0; }
    .cat .head { background: linear-gradient(90deg, #99b4d1, #b9d1ea); }
    .cat .tools { height: 24px; padding-left: 3px; margin-top: 1px; }
    .cat .tools .sep { height: 18px; }
    .locrow { display: flex; height: 26px; padding: 1px 0 3px 2px; align-items: center; font-family: "Open Sans", sans-serif; font-size: 11px; letter-spacing: -.25px; }
    .locrow > span:first-child { width: 52px; }
    .loc { width: 312px; height: 22px; border-radius: 2px; padding: 0 5px 0 2px; }
    .loc b { font-weight: 400; margin-right: auto; letter-spacing: -.2px; }
    .treebox { height: 802px; width: 365px; margin-left: 1px; border: 1px solid #696969; border-right-color: #e3e3e3; border-bottom-color: #e3e3e3; display: grid; grid-template: 784px 16px / 347px 16px; }
    .tree { overflow: hidden; background: #fff; }
    .tn { display: flex; height: 17px; align-items: center; }
    .tn .exp { margin-right: 6px; }
    .tn .nm { margin-left: 3px; padding: 0 2px; height: 17px; line-height: 17px; }
    .tn .hl { background: #f0f0f0; }
    .vs { display: flex; padding: 190px 0 0 6px; }
    .vs i { width: 2px; height: 441px; background: #858585; }
    .hs { padding: 7px 0 0 17px; }
    .hs i { display: block; width: 225px; height: 2px; background: #858585; }
    .dock { width: 21px; padding: 1px 0 0 1px; }
    .tab { width: 20px; height: 71px; border: 1px solid #8d8d8d; border-right: 0; border-radius: 3px 0 0 3px; background: #f0f0f0; padding: 4px 0 0 1px; display: flex; flex-direction: column; align-items: flex-start; gap: 3px; }
    .tab span { writing-mode: vertical-rl; font: 10px/14px "Liberation Mono", monospace; color: #6d6d6d; letter-spacing: 0; width: 14px; height: 43px; }
    .status { height: 22px; display: flex; background: #f0f0f0; padding: 2px 0 0; margin-top: auto; flex: none; }
    .status span { border-right: 1px solid #fbfbfb; }
    .status .s1 { width: 1613px; } .status .s2 { width: 20px; margin-left: 2px; }
    .status .s3 { padding: 1px 0 0 3px; line-height: 19px; border: 0; letter-spacing: .18px; }

    .drop { position: absolute; left: 500px; top: 26px; width: 176px; height: 171px; background: #fbfbfb linear-gradient(90deg, #fafafa, #efefef) 1px 1px / 27px 167px no-repeat; border: 1px solid #808080; box-shadow: 3px 3px 4px rgba(0,0,0,.3); z-index: 2; display: flex; flex-direction: column; padding-top: 1px; }
    .mi { display: flex; align-items: center; height: 23px; padding-left: 6px; flex: none; }
    .mi .ic { margin-right: 14px; }
    .mi .none { width: 30px; }
    .mi.hot { background: #b1d6f1; margin: 0 1px; padding-left: 5px; }
    .mi .key { margin-left: auto; margin-right: 20px; }
    .hr { height: 1px; background: #bdbdbd; margin: 1px 0 1px 36px; flex: none; }
    .mark { position: absolute; z-index: 4; background: #fb3838; }
    .frame { background: none; border: 7px solid #fb3838; }
    .m1 { left: 495px; top: 118px; width: 185px; height: 32px; }
    .m2 { left: 1565px; top: 280px; width: 261px; height: 30px; }
    .m3 { left: 1594px; top: 708px; width: 111px; height: 9px; }
    .m4 { left: 1634px; top: 729px; width: 118px; height: 9px; }
  `;

  private exp(s: string) {
    if (!s) return html`<span class="exp none"></span>`;
    return html`<span class="exp"><svg viewBox="0 0 7 7"><path d=${s === "+" ? "M1 3.5h5M3.5 1v5" : "M1 3.5h5"} stroke="#2b4f9e"/></svg></span>`;
  }

  private mi(ic: string, t: string, key = "", hot = false) {
    return html`<div class="mi ${hot ? "hot" : ""}">${ic ? icon(ic) : html`<span class="none"></span>`}<span>${t}</span>${key ? html`<span class="key">${key}</span>` : ""}</div>`;
  }

  render() {
    return html`<div class="app">
      <div class="menubar">${MENU.map(([m, w]) => html`<span class=${m === "Windows" ? "open" : ""} style=${styleMap({ width: w + "px" })}>${m}</span>`)}</div>
      <div class="row"><div class="bar row1"><span class="grip slim"></span>${items(ROW1)}</div></div>
      <div class="row">
        <div class="bar row2"><span class="grip slim"></span>${items(ROW2)}${items([138, { tpl: html`<span class="oldcombo"><span class="dd grey"></span></span>` }, 2, "tbl", "tblx", "|", "poly", "vg", 3, "seld", OVER])}</div>
        <div class="bar">${items([4, ":", 1, ...CN, { tpl: html`<span class="tiles">切片图层列表</span><span class="tilesdd"><span class="dd"></span></span>` }, 1, "link", "|", 4, T("选项...", 34), "v", "|", 5, T("用户/注册", 54), 3, "info", 2, OVER])}</div>
        <div class="bar">${items([1, ":", "pzi", "pzo", "phand", "pfull", "p11", "|", "pfi", "pfo", "|", "pback", 22, { over: true }])}</div>
      </div>
      <div class="row third">
        <div class="bar">${items([4, ":", "g1", "g2", "g3", "g4", "g5", "|", "g6", "ball", "|", "g7", "g8", "g9", "g10", "g11", "|", "g12", "g13", 2, OVER])}</div>
        <span class="gap" style=${styleMap({ width: "49px" })}></span>
        <div class="bar">${items([":", 1, T("Editor", 36), "v", "|", "garrow", "garrow", 155, "gsq", "gx", "rot", "|", "gtb", "gnode", "|", "gform", 3, OVER])}</div>
        <div class="bar">${items([4, ":", 1, T("Drawing", 49), "v", "arrow", "rotd", "zsel", "|", "rect", "v", 1, "A", "v", 1, "nodes", "|", combo("fontc", html`<svg class="ic" viewBox="0 0 16 16"><path d="M1 1h11l3 3v11H1z" fill="#cfe2f8" stroke="#7d9ac0"/><text x="7" y="13" font-family="Liberation Serif" font-style="italic" font-weight="700" font-size="15" text-anchor="middle" fill="#0b6a26">O</text></svg><span class="o">宋体</span>`), combo("sizec", "10"), "B", "I", "U", "|", 1, "Ac", 3, "v", 3, "fill", 3, "v", 3, "pen", 3, "v", 3, "dot", 3, "v", 4, OVER])}</div>
      </div>
      <div class="body">
        <div class="toc">
          <div class="head"><b>Table Of Contents</b>${icon("pin")}${icon("x")}</div>
          <div class="tools">${items(["*tdraw", "tsrc", "tvis", "tsel", "|", "opts"])}</div>
          <div class="toclist">
            <div class="tr l0">${this.exp("-")}${icon("layers")}<span>Layers</span></div>
            <div class="tr l1">${this.exp("-")}<span class="chk"><svg viewBox="0 0 9 9"><path d="M1 4l2.500 3L8 1" fill="none" stroke="#000" stroke-width="1.700"/></svg></span><span class="sel">dissolve_fid</span></div>
            <div class="tr"><span class="sw"></span></div>
          </div>
        </div>
        <div class="mapwrap">
          <div class="map"><svg viewBox="247 112 1278 859"><polygon transform="translate(590 180) scale(.33333)" points=${OUTLINE} fill="#d1fae0" stroke="#6e6e6e" stroke-width="3.200" shape-rendering="crispEdges"/>
            <path d="M673 483l3 2 4-1-1 3 2 2-5 1-2-3zM746 463h4v4h-4zM626 541h7v3h-7zM778 750h4v2h-4z" fill="#6e6e6e" shape-rendering="crispEdges"/></svg></div>
          <div class="mbar"><span class="v von">${icon("mdata")}</span><span class="v">${icon("mpage")}</span>${items([2, "|", 2])}<span class="v">${icon("refresh")}</span><span class="v">${icon("pause")}</span><span class="line"></span></div>
        </div>
        <div class="cat">
          <div class="head"><b>Catalog</b>${icon("pinh")}${icon("x")}</div>
          <div class="tools">${items(["cback", 3, "vg", 3, "cfwd", 2, "up", 1, "home", 1, "dbhome", 1, "|", 3, "list", 4, "vg", 3, "|", 2, "fconn", 1, "|", 2, "ctree", 1, "|", 1, "opts"])}</div>
          <div class="locrow"><span>Location:</span><span class="combo loc">${icon("hammer")}<b>Create Fishnet</b><svg class="chev" viewBox="0 0 10 6"><path d="M1 1l4 4 4-4" fill="none" stroke="#555"/></svg></span></div>
          <div class="treebox">
            <div class="tree">${TREE.map(([l, e, ic, n]) => html`<div class="tn" style=${styleMap({ paddingLeft: 26 + l * 19 + "px" })}>${this.exp(e)}${icon(ic)}<span class="nm ${n === "Create Fishnet" ? "hl" : ""}">${n}</span></div>`)}</div>
            <div class="vs"><i></i></div>
            <div class="hs"><i></i></div>
          </div>
        </div>
        <div class="dock"><div class="tab">${icon("cat")}<span>Catalog</span></div></div>
      </div>
      <div class="status"><span class="s1"></span><span class="s2"></span><span class="s3">537260.784  2747051.743 Meters</span></div>
      <div class="drop">
        ${this.mi("", "Overview")}${this.mi("", "Magnifier")}${this.mi("", "Viewer")}<div class="hr"></div>
        ${this.mi("toc", "Table Of Contents")}${this.mi("cat", "Catalog", "", true)}${this.mi("search", "Search", "Ctrl+F")}<div class="hr"></div>
        ${this.mi("img", "Image Analysis")}
      </div>
      <div class="mark frame m1"></div><div class="mark frame m2"></div><div class="mark m3"></div><div class="mark m4"></div>
    </div>`;
  }
}
